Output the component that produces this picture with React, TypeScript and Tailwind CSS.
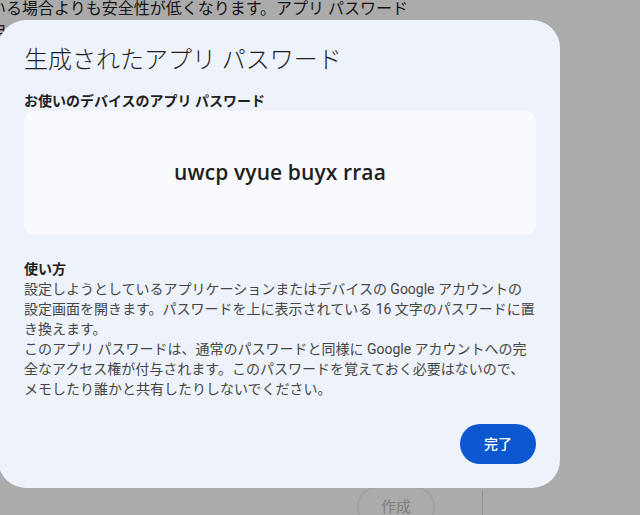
const jp = "font-['Roboto','Noto_Sans_CJK_JP',sans-serif]";

export default function App() {
  return (
    <div className={`relative h-[515px] w-[640px] overflow-hidden bg-white ${jp}`}>
      {/* page behind the dialog */}
      <div className="ml-[-10px] text-[16px] leading-[18px] text-[#1f1f1f]">
        <p>いる場合よりも安全性が低くなります。アプリ パスワード</p>
        <p className="mt-[6px]">用する場合は、安全でないアプリやデバイスでの利用を避けてください。</p>
      </div>
      <div className="mt-[445px] flex h-[40px]">
        <div className="ml-[357px] flex h-[40px] w-[78px] items-center justify-center rounded-full border border-[#e6e6e6] text-[15px] text-[#c0c0c0]">
          作成
        </div>
        <div className="ml-[47px] mt-[4px] w-px bg-[#d8d8d8]" />
      </div>

      {/* scrim */}
      <div className="absolute inset-0 bg-[#000000]/[0.33]" />

      {/* dialog */}
      <div className="absolute left-[-2px] top-[20px] flex h-[468px] w-[562px] flex-col rounded-[28px] bg-[#eef2fa] pb-6 pl-[26px] pr-6 pt-6">
        <h2 className="text-[24px] font-light leading-[32px] text-[#1f1f1f]">生成されたアプリ パスワード</h2>
        <p className="mt-[15px] text-[14px] font-bold leading-[20px] text-[#1f1f1f]">お使いのデバイスのアプリ パスワード</p>
        <div className="flex h-[124px] items-center justify-center rounded-[10px] bg-[#f8fafd]">
          <span className="font-['Open_Sans',sans-serif] text-[21px] font-semibold tracking-[0.1px] text-[#1f1f1f]">uwcp vyue buyx rraa</span>
        </div>
        <div className="mt-6 text-[14px] leading-[20px] text-[#444746]">
          <p className="font-bold text-[#1f1f1f]">使い方</p>
          <p>
            設定しようとしているアプリケーションまたはデバイスの Google アカウントの
            <br />
            設定画面を開きます。パスワードを上に表示されている 16 文字のパスワードに置
            <br />
            き換えます。
          </p>
          <p>
            このアプリ パスワードは、通常のパスワードと同様に Google アカウントへの完
            <br />
            全なアクセス権が付与されます。このパスワードを覚えておく必要はないので、
            <br />
            メモしたり誰かと共有したりしないでください。
          </p>
        </div>
        <div className="mt-auto flex justify-end">
          <button className="flex h-10 w-[76px] items-center justify-center rounded-full bg-[#0b57d0] text-[14px] font-medium text-white">
            完了
          </button>
        </div>
      </div>
    </div>
  );
}
